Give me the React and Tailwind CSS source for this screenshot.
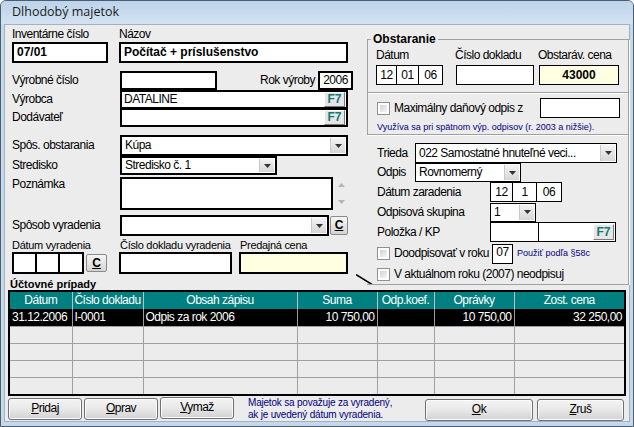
import React from "react";

const sans = "font-['Liberation_Sans',Arial,sans-serif]";

function Field({ className = "", bg = "bg-white", bw = "border-2", children }) {
  return (
    <div className={`${bg} ${bw} border-black flex items-center overflow-hidden whitespace-nowrap ${className}`}>
      {children}
    </div>
  );
}

function DropBtn() {
  return (
    <div className="ml-auto h-full w-[15px] shrink-0 flex items-center justify-center bg-gradient-to-b from-[#f4f4f4] to-[#d6d6d6] border-l border-[#c8c8c8]">
      <svg width="7" height="4" viewBox="0 0 7 4">
        <path d="M0 0h7L3.5 4z" fill="#333" />
      </svg>
    </div>
  );
}

function F7() {
  return (
    <div className="ml-auto h-full w-[21px] shrink-0 flex items-center justify-center bg-[#e6e6e6] border border-t-white border-l-white border-r-[#7a7a7a] border-b-[#7a7a7a] text-[#117a74] font-bold text-[12px] tracking-normal">
      F7
    </div>
  );
}

function CBtn({ className = "" }) {
  return (
    <div className={`flex items-center justify-center bg-gradient-to-b from-[#f6f6f6] to-[#d4d4d4] border border-[#8a8a8a] rounded-[2px] font-bold underline text-[12px] tracking-normal ${className}`}>
      C
    </div>
  );
}

function Check() {
  return (
    <div className="w-[13px] h-[13px] shrink-0 border border-[#8e8f8f] bg-white p-[2px]">
      <div className="w-full h-full bg-gradient-to-br from-[#d2d2d2] to-[#f6f6f6]" />
    </div>
  );
}

function Btn({ first, rest, className = "" }) {
  return (
    <div className={`h-[22px] flex items-center justify-center rounded-[3px] border border-[#707070] bg-gradient-to-b from-[#f4f4f4] via-[#e8e8e8] to-[#d2d2d2] shadow-[inset_0_0_0_1px_#fbfbfb] ${className}`}>
      <span>
        <span className="underline">{first}</span>
        {rest}
      </span>
    </div>
  );
}

const cols = [
  { name: "Dátum", w: "w-[62px]" },
  { name: "Číslo dokladu", w: "w-[71px]" },
  { name: "Obsah zápisu", w: "w-[154px]" },
  { name: "Suma", w: "w-[80px]" },
  { name: "Odp.koef.", w: "w-[57px]" },
  { name: "Oprávky", w: "w-[80px]" },
  { name: "Zost. cena", w: "" },
];

const rows = [
  ["31.12.2006", "I-0001", "Odpis za rok 2006", "10 750,00", "", "10 750,00", "32 250,00"],
  ["", "", "", "", "", "", ""],
  ["", "", "", "", "", "", ""],
  ["", "", "", "", "", "", ""],
  ["", "", "", "", "", "", ""],
];

export default function App() {
  return (
    <div className={`w-[634px] h-[427px] flex flex-col bg-[#c6d9ec] border border-[#4d5d6e] rounded-t-[6px] overflow-hidden text-black ${sans}`}>
      {/* title bar */}
      <div className="h-[23px] shrink-0 flex items-center pl-[11px] bg-gradient-to-b from-[#bcd3ea] to-[#d3e2f1]">
        <span className="text-[12.5px] text-[#1b1b1b] font-['Open_Sans',sans-serif]">Dlhodobý majetok</span>
      </div>

      {/* client */}
      <div className="flex-1 mx-[3px] flex flex-col bg-[#ececec] border border-[#9fb1c4] text-[12px] leading-[13px] tracking-[-0.5px]">
        {/* top section */}
        <div className="h-[265px] shrink-0 flex">
          {/* left column */}
          <div className="w-[352px] flex flex-col">
            <div className="pl-[7px] pr-[4px] flex flex-col flex-1">
              <div className="flex mt-[3px] h-[13px] items-center">
                <span className="w-[107px]">Inventárne číslo</span>
                <span>Názov</span>
              </div>
              <div className="flex mt-[1px] font-bold text-[12px] tracking-normal">
                <Field className="w-[96px] h-[21px] pl-[3px]">07/01</Field>
                <Field className="ml-[11px] w-[229px] h-[21px] pl-[3px]">Počítač + príslušenstvo</Field>
              </div>

              <div className="flex items-center mt-[8px] h-[19px]">
                <span className="w-[108px]">Výrobné číslo</span>
                <Field className="w-[97px] h-[19px]" />
                <span className="flex-1 text-right pr-[3px]">Rok výroby</span>
                <Field className="w-[35px] h-[19px] justify-center">2006</Field>
              </div>
              <div className="flex items-center h-[18px]">
                <span className="w-[108px]">Výrobca</span>
                <Field className="w-[228px] h-[19px] pl-[2px] pr-[1px]">
                  DATALINE
                  <F7 />
                </Field>
              </div>
              <div className="flex items-center h-[19px]">
                <span className="w-[108px]">Dodávateľ</span>
                <Field className="w-[228px] h-[19px] pr-[1px]">
                  <F7 />
                </Field>
              </div>

              <div className="flex items-center mt-[8px] h-[21px]">
                <span className="w-[108px]">Spôs. obstarania</span>
                <Field className="w-[228px] h-[21px] pl-[3px] pr-[1px] py-[1px]">
                  Kúpa
                  <DropBtn />
                </Field>
              </div>
              <div className="flex items-center h-[19px]">
                <span className="w-[108px]">Stredisko</span>
                <Field className="w-[157px] h-[19px] pl-[3px] pr-[1px] py-[1px]">
                  Stredisko č. 1
                  <DropBtn />
                </Field>
              </div>
              <div className="flex mt-[2px] h-[33px]">
                <span className="w-[108px] pt-[1px]">Poznámka</span>
                <Field className="w-[213px] h-[33px]" />
                <div className="ml-[2px] w-[12px] flex flex-col justify-between items-center py-[6px]">
                  <svg width="7" height="4" viewBox="0 0 7 4">
                    <path d="M0 4h7L3.5 0z" fill="#b4b4b4" />
                  </svg>
                  <svg width="7" height="4" viewBox="0 0 7 4">
                    <path d="M0 0h7L3.5 4z" fill="#b4b4b4" />
                  </svg>
                </div>
              </div>

              <div className="flex items-center mt-[5px] h-[21px]">
                <span className="w-[108px]">Spôsob vyradenia</span>
                <Field className="w-[209px] h-[21px] pr-[1px] py-[1px]">
                  <DropBtn />
                </Field>
                <CBtn className="ml-[1px] w-[18px] h-[19px]" />
              </div>

              <div className="flex mt-[3px] h-[12px] items-center text-[11px] tracking-[-0.3px]">
                <span className="w-[108px]">Dátum vyradenia</span>
                <span className="w-[120px]">Číslo dokladu vyradenia</span>
                <span>Predajná cena</span>
              </div>
              <div className="flex items-center mt-[1px] h-[22px]">
                <div className="flex">
                  <Field className="w-[25px] h-[22px]" />
                  <Field className="w-[25px] h-[22px] -ml-[2px]" />
                  <Field className="w-[26px] h-[22px] -ml-[2px]" />
                </div>
                <CBtn className="ml-[2px] w-[21px] h-[18px]" />
                <Field className="ml-[12px] w-[113px] h-[22px]" />
                <Field className="ml-[7px] w-[109px] h-[22px]" bg="bg-[#ffffe1]" />
              </div>
            </div>
            <div className="h-[2px] bg-black" />
            <div className="h-[16px] flex items-start">
              <span className="pl-[5px] mt-[4px] font-bold text-[11px] leading-[12px] tracking-normal">Účtovné prípady</span>
              <svg className="ml-auto -mr-[16px]" width="17" height="11" viewBox="0 0 17 11">
                <path d="M0 0.5L16 10.5" stroke="#000" strokeWidth="1.5" />
              </svg>
            </div>
          </div>

          {/* right column */}
          <div className="flex-1 flex flex-col pl-[10px] pb-[6px]">
            <fieldset className="mt-[8px] border border-[#a0a0a0] shadow-[1px_1px_0_#fff]">
              <legend className="ml-[3px] px-[2px] font-bold text-[12px] leading-[12px] tracking-normal">Obstaranie</legend>
              <div className="px-[8px]">
                <div className="flex mt-[4px] h-[13px] items-center">
                  <span className="w-[79px]">Dátum</span>
                  <span className="w-[83px]">Číslo dokladu</span>
                  <span>Obstaráv. cena</span>
                </div>
                <div className="flex mt-[3px] h-[20px]">
                  <div className="flex bg-white border border-black">
                    <span className="w-[20px] text-center leading-[18px] border-r border-black">12</span>
                    <span className="w-[22px] text-center leading-[18px] border-r border-black">01</span>
                    <span className="w-[23px] text-center leading-[18px]">06</span>
                  </div>
                  <div className="ml-[13px] w-[78px] bg-white border border-black" />
                  <div className="ml-[5px] w-[80px] bg-[#ffffe1] border border-black flex items-center justify-center font-bold text-[12px] tracking-normal">43000</div>
                </div>
              </div>
              <div className="mt-[7px] h-[2px] border-t border-[#a0a0a0] border-b border-b-white" />
              <div className="px-[9px]">
                <div className="flex items-center h-[20px] mt-[4px]">
                  <Check />
                  <span className="ml-[4px]">Maximálny daňový odpis z</span>
                  <div className="ml-auto mr-[-1px] w-[80px] h-[20px] bg-white border border-black" />
                </div>
                <div className="mt-[3px] h-[13px] text-[9px] leading-[12px] tracking-normal text-[#000080] whitespace-nowrap">Využíva sa pri spätnom výp. odpisov (r. 2003 a nižšie).</div>
              </div>
            </fieldset>

            <div className="flex-1 flex flex-col pl-[10px] border-r border-[#a0a0a0] border-b shadow-[1px_0_0_#fff]">
              <div className="flex items-center mt-[8px] h-[20px]">
                <span className="w-[38px]">Trieda</span>
                <Field bw="border" className="w-[202px] h-[20px] pl-[3px] pr-[1px] py-[1px]">
                  022 Samostatné hnuteľné veci...
                  <DropBtn />
                </Field>
              </div>
              <div className="flex items-center h-[19px]">
                <span className="w-[38px]">Odpis</span>
                <Field bw="border" className="w-[106px] h-[19px] pl-[3px] pr-[1px] py-[1px]">
                  Rovnomerný
                  <DropBtn />
                </Field>
              </div>
              <div className="flex items-center h-[20px]">
                <span className="w-[113px]">Dátum zaradenia</span>
                <div className="flex h-[20px] bg-white border border-black">
                  <span className="w-[22px] text-center leading-[18px] border-r border-black">12</span>
                  <span className="w-[24px] text-center leading-[18px] border-r border-black">1</span>
                  <span className="w-[24px] text-center leading-[18px]">06</span>
                </div>
              </div>
              <div className="flex items-center h-[20px]">
                <span className="w-[113px]">Odpisová skupina</span>
                <Field bw="border" className="w-[46px] h-[19px] pl-[3px] pr-[1px] py-[1px]">
                  1
                  <DropBtn />
                </Field>
              </div>
              <div className="flex items-center h-[20px]">
                <span className="w-[113px]">Položka / KP</span>
                <div className="flex h-[20px] bg-white border border-black">
                  <span className="w-[48px] border-r border-black" />
                  <div className="w-[76px] flex p-[1px]">
                    <F7 />
                  </div>
                </div>
              </div>
              <div className="flex items-center h-[21px] mt-[1px]">
                <Check />
                <span className="ml-[4px] w-[98px] whitespace-nowrap">Doodpisovať v roku</span>
                <div className="w-[21px] h-[20px] bg-white border border-black text-center leading-[14px]">07</div>
                <span className="ml-[4px] text-[9px] tracking-normal text-[#000080] whitespace-nowrap">Použiť podľa §58c</span>
              </div>
              <div className="flex items-center h-[19px] mt-[1px]">
                <Check />
                <span className="ml-[4px] whitespace-nowrap">V aktuálnom roku (2007) neodpisuj</span>
              </div>
            </div>
          </div>
        </div>

        {/* table */}
        <div className="mx-[3px] h-[106px] shrink-0 border-2 border-black bg-[#ececec] overflow-hidden">
          <table className="w-full table-fixed border-collapse">
            <thead>
              <tr className="h-[17px] bg-[#008080] text-white">
                {cols.map((c) => (
                  <th key={c.name} className={`${c.w} font-normal text-center border-r border-[#c0c0c0] last:border-r-0 p-0 leading-[17px] whitespace-nowrap`}>
                    {c.name}
                  </th>
                ))}
              </tr>
            </thead>
            <tbody>
              {rows.map((r, i) => (
                <tr key={i} className={`h-[17px] ${i === 0 ? "bg-black text-white" : ""}`}>
                  {r.map((v, j) => (
                    <td
                      key={j}
                      className={`p-0 px-[2px] leading-[16px] whitespace-nowrap overflow-hidden border-r last:border-r-0 ${
                        i === 0 ? "border-[#9a9a9a]" : "border-[#a0a0a0] border-t"
                      } ${j === 3 || j === 5 || j === 6 ? "text-right" : "text-left"}`}
                    >
                      {v}
                    </td>
                  ))}
                </tr>
              ))}
            </tbody>
          </table>
        </div>

        {/* buttons */}
        <div className="flex items-center pl-[3px] pr-[5px] flex-1">
          <Btn first="P" rest="ridaj" className="w-[74px]" />
          <Btn first="O" rest="prav" className="ml-[2px] w-[74px]" />
          <Btn first="V" rest="ymaž" className="ml-[2px] w-[74px] -mt-[2px]" />
          <div className="ml-[14px] text-[10px] leading-[12px] tracking-[-0.2px] text-[#000080] whitespace-nowrap">
            <div>Majetok sa považuje za vyradený,</div>
            <div>ak je uvedený dátum vyradenia.</div>
          </div>
          <Btn first="O" rest="k" className="ml-auto w-[108px] mt-[2px]" />
          <Btn first="Z" rest="ruš" className="ml-[4px] w-[87px] mt-[2px]" />
        </div>
      </div>
      <div className="h-[4px] shrink-0" />
    </div>
  );
}
